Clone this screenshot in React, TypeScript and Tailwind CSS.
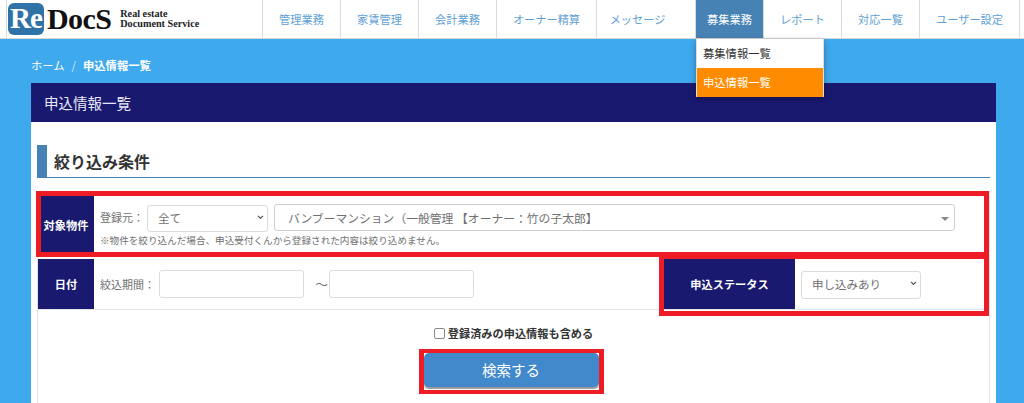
const jp = "font-['Noto_Sans_CJK_JP','Noto_Sans',sans-serif]";

const navItems = [
  { label: "管理業務", w: "w-[78px]" },
  { label: "家賃管理", w: "w-[78px]" },
  { label: "会計業務", w: "w-[78px]" },
  { label: "オーナー精算", w: "w-[100px]" },
  { label: "メッセージ", w: "w-[99px] pr-[17px]" },
  { label: "募集業務", w: "w-[68px]", active: true },
  { label: "レポート", w: "w-[78px]" },
  { label: "対応一覧", w: "w-[78px]" },
  { label: "ユーザー設定", w: "w-[100px]" },
];

const Logo = () => (
  <div className="flex h-full w-[256px] items-center border-l border-[#dcdcdc] pl-[1px]">
    <div className="flex h-[32px] w-[36px] items-center justify-center rounded-[6px] bg-[#2f72a8] font-['Liberation_Serif',serif] text-[29px] font-bold tracking-[-1px] text-white">
      Re
    </div>
    <span className="ml-[3px] font-['Liberation_Serif',serif] text-[30px] leading-none font-bold tracking-[-0.6px] text-[#111]">
      DocS
    </span>
    <div className="ml-[9px] font-['Liberation_Serif',serif] text-[10.2px] leading-[10px] font-bold text-[#222]">
      <div>Real estate</div>
      <div>Document Service</div>
    </div>
  </div>
);

const Header = () => (
  <header className="flex h-[39px] border-b border-[#d8d8d8] bg-white pl-[6px]">
    <Logo />
    <nav className="flex h-full border-l border-[#dcdcdc]">
      {navItems.map((item) => (
        <div
          key={item.label}
          className={`flex h-full items-center justify-center border-r border-[#dcdcdc] text-[11.2px] ${item.w} ${
            item.active ? "bg-[#4682b4] text-white" : "text-[#5f9fd4]"
          }`}
        >
          {item.label}
        </div>
      ))}
    </nav>
  </header>
);

const Label = ({ children, w }: { children: React.ReactNode; w: string }) => (
  <div className={`flex shrink-0 items-center justify-center bg-[#191970] text-[11.2px] font-bold text-white ${w}`}>
    {children}
  </div>
);

const Select = ({ value, w, h }: { value: string; w: string; h: string }) => (
  <div className={`relative ${w} ${h}`}>
    <select
      defaultValue={value}
      className="size-full appearance-none rounded-[3px] border border-[#dcdcdc] bg-white pl-[10px] text-[11.5px] text-[#707070]"
    >
      <option>{value}</option>
    </select>
    <svg
      viewBox="0 0 8 6"
      className="pointer-events-none absolute top-[11px] right-[4px] h-[5px] w-[7px]"
      fill="none"
      stroke="#555"
      strokeWidth="1.5"
    >
      <path d="M1 1l3 3 3-3" />
    </svg>
  </div>
);

const Input = () => (
  <input className="h-[28px] w-[145px] rounded-[3px] border border-[#dcdcdc] bg-white" />
);

const Filters = () => (
  <div className="mt-[13px] flex h-[225px] flex-col border-x border-[#e4e4e4]">
    <div className="flex h-[66px]">
      <Label w="w-[56px] pt-[2px]">対象物件</Label>
      <div className="flex-1 pt-[12px] pl-[6px] text-[#707070]">
        <div className="flex items-center">
          <span className="w-[47px] text-[11px]">登録元：</span>
          <Select value="全て" w="w-[121px]" h="h-[27px]" />
          <div className="relative mt-[1px] ml-[6px] flex h-[27px] w-[681px] items-center rounded-[3px] border border-[#cfcfcf] pl-[13px] text-[11.8px]">
            バンブーマンション（一般管理 【オーナー：竹の子太郎】
            <span className="absolute top-[12px] right-[5px] border-x-[4px] border-t-[4px] border-x-transparent border-t-[#888]" />
          </div>
        </div>
        <p className="mt-[2px] text-[9.6px] leading-[14px]">
          ※物件を絞り込んだ場合、申込受付くんから登録された内容は絞り込めません。
        </p>
      </div>
    </div>
    <div className="mt-[2px] flex h-[51px] border-b border-[#e4e4e4]">
      <Label w="w-[56px]">日付</Label>
      <div className="flex flex-1 items-center pl-[6px] text-[#707070]">
        <span className="w-[59px] text-[11px]">絞込期間：</span>
        <Input />
        <span className="w-[25px] pl-[11px] text-[13px]">～</span>
        <Input />
      </div>
      <Label w="w-[131px]">申込ステータス</Label>
      <div className="flex w-[194px] items-center pl-[6px]">
        <Select value="申し込みあり" w="w-[120px]" h="h-[28px]" />
      </div>
    </div>
    <div className="flex flex-col items-center">
      <label className="mt-[16px] flex h-[14px] items-center text-[11.2px] font-bold text-[#333]">
        <input type="checkbox" className="mr-[3px] size-[11px] appearance-none rounded-[2px] border border-[#888] bg-white" />
        登録済みの申込情報も含める
      </label>
      <button className="mt-[13px] ml-[-5px] h-[34px] w-[175px] rounded-[5px] bg-[#4189cb] text-[14.5px] text-white shadow-[0_2px_1px_#999]">
        検索する
      </button>
    </div>
  </div>
);

// 赤枠の注釈
const RedBox = ({ className }: { className: string }) => (
  <div className={`pointer-events-none absolute border-[#ee1c25] ${className}`} />
);

export default function App() {
  return (
    <div className={`relative h-[403px] w-[1024px] overflow-hidden bg-[#3fa9ee] ${jp}`}>
      <Header />
      <main className="pr-[28px] pl-[31px]">
        <div className="flex h-[44px] items-center pt-[8px] text-[11.3px] text-white">
          <span>ホーム</span>
          <span className="mx-[7px] opacity-70">/</span>
          <span className="font-bold">申込情報一覧</span>
        </div>
        <section className="h-[320px] bg-white">
          <div className="flex h-[39px] items-center bg-[#191970] pl-[13px] text-[14.5px] text-[#e8e8f4]">
            申込情報一覧
          </div>
          <div className="px-[6px] pt-[23px]">
            <h2 className="flex h-[33px] items-center border-b border-l-[10px] border-[#4682b4] pl-[7px] text-[16px] font-bold text-[#333]">
              絞り込み条件
            </h2>
            <Filters />
          </div>
        </section>
      </main>

      <div className="absolute top-[39px] left-[696px] w-[128px] border-x border-[#ddd] text-[11.3px] shadow-[0_2px_6px_rgba(0,0,0,0.35)]">
        <div className="flex h-[29px] items-center bg-white pl-[6px] text-[#333]">募集情報一覧</div>
        <div className="flex h-[29px] items-center bg-[#ff8c00] pl-[6px] text-white">申込情報一覧</div>
      </div>

      <RedBox className="top-[191px] left-[36px] h-[66px] w-[953px] border-[5px]" />
      <RedBox className="top-[254px] left-[659px] h-[62px] w-[330px] border-[5px]" />
      <RedBox className="top-[349px] left-[419px] h-[45px] w-[185px] border-x-[5px] border-y-[4px]" />
    </div>
  );
}
